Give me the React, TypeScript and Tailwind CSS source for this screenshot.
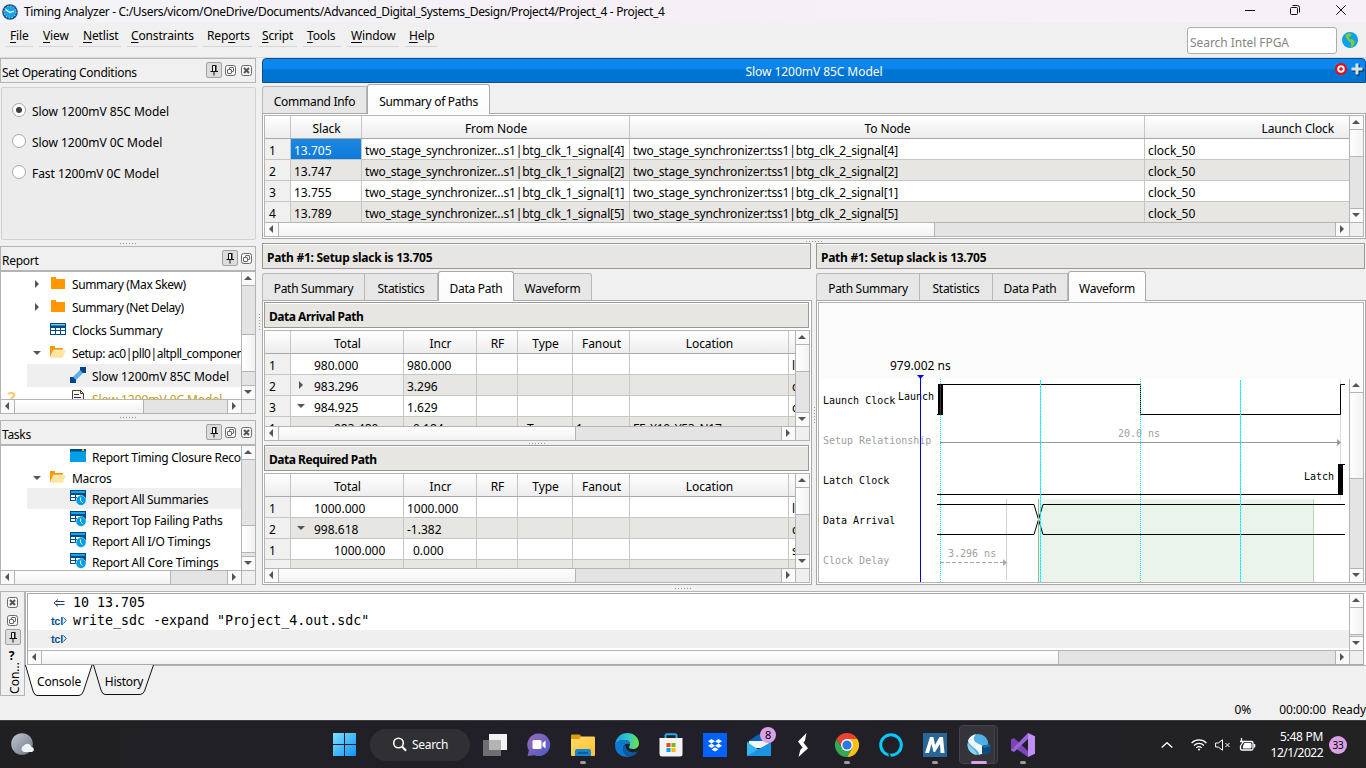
import React from "react";

/* ---------- shared controls ---------- */

function Arrow({ dir, className = "" }: { dir: "up" | "down" | "left" | "right"; className?: string }) {
  const d = {
    up: "M0 6L4 2L8 6Z",
    down: "M0 2L8 2L4 6Z",
    left: "M6 0L6 8L2 4Z",
    right: "M2 0L6 4L2 8Z",
  }[dir];
  return (
    <svg viewBox="0 0 8 8" className={"block h-2 w-2 shrink-0 " + className}>
      <path d={d} fill="#555" />
    </svg>
  );
}

function VScroll({ pre, thumb }: { pre: string; thumb: string }) {
  return (
    <div className="flex w-[14px] shrink-0 flex-col border-l border-[#b4b4b4] bg-[#e4e4e4]">
      <div className="flex h-[14px] shrink-0 items-center justify-center border-b border-[#b4b4b4] bg-[#fafafa] pb-px pr-px">
        <Arrow dir="up" />
      </div>
      <div className={"shrink-0 " + pre} />
      <div className={"shrink-0 border-b border-[#b4b4b4] bg-gradient-to-r from-white to-[#f2f2f2] " + thumb} />
      <div className="flex-1" />
      <div className="flex h-[14px] shrink-0 items-center justify-center border-t border-[#b4b4b4] bg-[#fafafa] pb-px pr-px">
        <Arrow dir="down" />
      </div>
    </div>
  );
}

function HScroll({ thumb, corner = true }: { thumb: string; corner?: boolean }) {
  return (
    <div className="flex h-[14px] shrink-0 border-t border-[#b4b4b4] bg-[#e4e4e4]">
      <div className="flex w-[14px] shrink-0 items-center justify-center border-r border-[#b4b4b4] bg-[#fafafa] pb-px pr-px">
        <Arrow dir="left" />
      </div>
      <div className={"shrink-0 border-r border-[#b4b4b4] bg-gradient-to-b from-white to-[#f2f2f2] " + thumb} />
      <div className="flex-1" />
      <div className="flex w-[14px] shrink-0 items-center justify-center border-l border-[#b4b4b4] bg-[#fafafa] pb-px pr-px">
        <Arrow dir="right" />
      </div>
      {corner && <div className="w-[14px] shrink-0 border-l border-[#b4b4b4] bg-[#efefef]" />}
    </div>
  );
}

function HDots({ className = "" }: { className?: string }) {
  return (
    <div className={"flex shrink-0 items-center justify-center gap-[2px] " + className}>
      {[0, 1, 2, 3, 4, 5].map((i) => (
        <span key={i} className="h-px w-px bg-[#9a9a9a]" />
      ))}
    </div>
  );
}

function VDots({ className = "" }: { className?: string }) {
  return (
    <div className={"flex shrink-0 flex-col items-center justify-center gap-[2px] " + className}>
      {[0, 1, 2, 3, 4, 5].map((i) => (
        <span key={i} className="h-px w-px bg-[#9a9a9a]" />
      ))}
    </div>
  );
}

function PinButton() {
  return (
    <span className="flex h-4 w-4 shrink-0 items-center justify-center rounded-[2px] border border-[#a2a2a2] bg-[#dcdcdc]">
      <svg viewBox="0 0 10 12" className="h-3 w-[10px] shrink-0" fill="none" stroke="#111">
        <path d="M3.500 7V1.500H6.500V7" fill="#efefef" />
        <path d="M7 1v6.500" />
        <path d="M1.500 7.500h7.500M5 8v3.500" />
      </svg>
    </span>
  );
}

function FloatButton() {
  return (
    <svg viewBox="0 0 11 11" className="block h-[11px] w-[11px] shrink-0" fill="none" stroke="#6a6a6a">
      <rect x=".5" y=".5" width="10" height="10" rx="2" fill="#f6f6f6" />
      <rect x="4.500" y="2.500" width="4" height="4" rx=".5" />
      <rect x="2.500" y="4.500" width="4" height="4" rx=".5" fill="#f6f6f6" />
    </svg>
  );
}

function CloseButton() {
  return (
    <svg viewBox="0 0 11 11" className="block h-[11px] w-[11px] shrink-0" fill="none" stroke="#6a6a6a">
      <rect x=".5" y=".5" width="10" height="10" rx="2" fill="#f6f6f6" />
      <path d="M3 3l5 5M8 3l-5 5" stroke="#555" strokeWidth="2" />
    </svg>
  );
}

function DockTitle({ title, close }: { title: string; close?: boolean }) {
  return (
    <div className="flex h-[25px] w-64 shrink-0 items-start justify-between border border-[#b4b4b4] bg-[#f0f0f0] pl-px pr-[3px]">
      <span className="leading-[27px]">{title}</span>
      <span className="flex items-center pt-[3px]">
        <PinButton />
        <span className="ml-[3px]">
          <FloatButton />
        </span>
        {close && (
          <span className="ml-[5px]">
            <CloseButton />
          </span>
        )}
      </span>
    </div>
  );
}

/* ---------- tree icons ---------- */

const FolderIcon = () => (
  <svg viewBox="0 0 16 14" className="h-[14px] w-4">
    <path d="M1 1h5v2h9v10H1z" fill="#ff9800" />
  </svg>
);
const OpenFolderIcon = () => (
  <svg viewBox="0 0 16 14" className="h-[14px] w-4">
    <path d="M0 1h5v2h8v9H0z" fill="#ff9800" />
    <path d="M3.500 5H16l-3 8H0z" fill="#ffe5a0" stroke="#fff" strokeWidth=".5" />
  </svg>
);
const TableIcon = () => (
  <svg viewBox="0 0 16 14" className="h-[14px] w-4">
    <path d="M0 1h16v12H0z" fill="#004a86" />
    <path d="M1 2h14v1.500H1z" fill="#6fc6ef" />
    <path d="M1 6h4v2H1zM6 6h4v2H6zM11 6h4v2h-4zM1 9h4v3H1zM6 9h4v3H6zM11 9h4v3h-4z" fill="#fff" />
  </svg>
);
const PathIcon = () => (
  <svg viewBox="0 0 16 16" className="h-4 w-4">
    <path d="M3 13L13 3" stroke="#5bb0ea" strokeWidth="4.500" />
    <path d="M10 0h6v6h-3l-3-3zM0 10h3l3 3v3H0z" fill="#00478a" />
  </svg>
);
const PageIcon = () => (
  <svg viewBox="0 0 16 16" className="h-4 w-4" fill="none">
    <path d="M2.500 .5h8l3 3v12h-11z" fill="#fff7ea" stroke="#4b4036" />
    <path d="M10.500 .5v3h3" stroke="#4b4036" />
    <path d="M4 4.500h5M4 7.500h7M4 10.500h7" stroke="#1f2f7a" />
  </svg>
);
const WindowIcon = () => (
  <svg viewBox="0 0 16 14" className="h-[14px] w-4">
    <path d="M0 1h16v12H0z" fill="#00a0e9" />
    <path d="M0 0h16v2.500H0z" fill="#004a86" />
    <path d="M12 0h2v2h-2z" fill="#ffb400" />
  </svg>
);
const MacroIcon = () => (
  <svg viewBox="0 0 16 16" className="h-4 w-4">
    <path d="M0 0h16v11H0z" fill="#004a86" />
    <path d="M1 1h14v2H1z" fill="#12a5ea" />
    <path d="M1 5h4v2H1zM6 5h4v2H6zM1 8h4v2H1zM6 8h4v2H6z" fill="#fff" />
    <circle cx="11" cy="10.500" r="5" fill="#009fe3" stroke="#fff" strokeWidth=".5" />
    <path d="M10.600 7.500v3l1.800 2.200" stroke="#fff" fill="none" />
  </svg>
);

function TreeRow({
  level,
  arrow,
  icon,
  label,
  h,
  active,
  warn,
  spacing = "",
}: {
  level: 1 | 2;
  arrow?: "right" | "down";
  icon: React.ReactNode;
  label: string;
  h: string;
  active?: boolean;
  warn?: boolean;
  spacing?: string;
}) {
  return (
    <div className={"flex shrink-0 " + h}>
      <div className="w-[26px] shrink-0 pl-[7px] text-[16px] font-bold leading-[22px] text-[#ffc966]">{warn ? "?" : ""}</div>
      <div className={"flex h-full flex-1 items-center whitespace-nowrap " + (active ? "bg-[#efefef]" : "")}>
        <span className={"flex shrink-0 items-center pl-[6px] " + (level === 1 ? "w-[23px]" : "w-[43px]")}>
          {arrow && <Arrow dir={arrow} />}
        </span>
        <span className="flex w-[22px] shrink-0 pb-px">{icon}</span>
        <span className={"pt-[3px] " + spacing + (warn ? " text-[#c8a000]" : "")}>{label}</span>
      </div>
    </div>
  );
}

/* ---------- tables and tabs ---------- */

function Tabs({ items, active }: { items: { label: string; w: string }[]; active: number }) {
  return (
    <div className="flex h-[30px] shrink-0 items-end border-b border-[#a9a9a9]">
      {items.map((t, i) =>
        i === active ? (
          <div
            key={t.label}
            className={
              "relative top-px h-[30px] rounded-t-[3px] border border-b-0 border-[#a9a9a9] bg-gradient-to-b from-white to-[#fbfbfb] text-center leading-[33px] " +
              t.w
            }
          >
            {t.label}
          </div>
        ) : (
          <div
            key={t.label}
            className={
              "h-[27px] border-r border-t border-[#b9b9b9] bg-[#e7e7e7] text-center leading-[30px] first:rounded-tl-[3px] first:border-l last:rounded-tr-[3px] " +
              t.w
            }
          >
            {t.label}
          </div>
        )
      )}
    </div>
  );
}

function LabelBox({ children, className = "mr-px tracking-[-0.48px]" }: { children: React.ReactNode; className?: string }) {
  return (
    <div
      className={
        "h-[26px] shrink-0 border border-[#999993] bg-[#e8e6e2] pl-1 text-[12px] font-bold leading-[27px] shadow-[inset_0_1px_0_#fff] " + className
      }
    >
      {children}
    </div>
  );
}

const topCols = [
  { h: "Slack", w: "w-[71px]" },
  { h: "From Node", w: "w-[268px]" },
  { h: "To Node", w: "w-[515px]" },
];
const topRows = [
  ["1", "13.705", "4"],
  ["2", "13.747", "2"],
  ["3", "13.755", "1"],
  ["4", "13.789", "5"],
];

function HeadCell({ w, children }: { w: string; children?: React.ReactNode }) {
  return (
    <div
      className={
        "h-full shrink-0 overflow-hidden whitespace-nowrap border-r border-[#c6c6c6] pl-px text-center leading-[26px] tracking-[-0.1px] " + w
      }
    >
      {children}
    </div>
  );
}

function Cell({ w, className = "tracking-normal", children }: { w: string; className?: string; children?: React.ReactNode }) {
  return (
    <div className={"flex h-full shrink-0 overflow-hidden whitespace-nowrap border-r border-[#c6c6c6] leading-[24px] " + w + " " + className}>
      {children}
    </div>
  );
}

function PathsTable() {
  return (
    <div className="flex h-[125px] shrink-0 flex-col border-x border-b border-[#a9a9a9] bg-white p-px">
      <div className="flex h-full flex-col border border-[#b4b4b4]">
        <div className="flex h-[106px] shrink-0">
          <div className="flex flex-1 flex-col overflow-hidden">
            <div className="flex h-[23px] shrink-0 border-b border-[#a9a9a9] bg-gradient-to-b from-white to-[#ededed]">
              <HeadCell w="w-[26px]" />
              {topCols.map((c) => (
                <HeadCell key={c.h} w={c.w}>
                  {c.h}
                </HeadCell>
              ))}
              <div className="flex-1 pr-[15px] text-right leading-[26px] tracking-[-0.15px]">Launch Clock</div>
            </div>
            {topRows.map((r, i) => (
              <div key={r[0]} className={"flex h-[21px] shrink-0 border-b border-[#c6c6c6] " + (i % 2 ? "bg-[#e8e6e2]" : "bg-white")}>
                <Cell w="w-[26px]" className="bg-[#f0f0f0] pl-1 tracking-normal">
                  {r[0]}
                </Cell>
                <Cell
                  w="w-[71px]"
                  className={"pl-[3px] tracking-normal " + (i === 0 ? "bg-gradient-to-b from-[#1e88e0] to-[#0a7ada] text-white" : "")}
                >
                  {r[1]}
                </Cell>
                <Cell w="w-[268px]" className="pl-[3px] tracking-[-0.17px]">
                  {"two_stage_synchronizer...s1|btg_clk_1_signal[" + r[2] + "]"}
                </Cell>
                <Cell w="w-[515px]" className="pl-[3px] tracking-[-0.17px]">
                  {"two_stage_synchronizer:tss1|btg_clk_2_signal[" + r[2] + "]"}
                </Cell>
                <div className="flex-1 pl-[3px] leading-[24px] tracking-normal">clock_50</div>
              </div>
            ))}
          </div>
          <VScroll pre="h-0" thumb="h-[27px]" />
        </div>
        <HScroll thumb="w-[656px]" />
      </div>
    </div>
  );
}

type PRow = {
  n: string;
  arrow?: "right" | "down";
  total: string;
  indent?: boolean;
  incr: string;
  type?: string;
  fan?: string;
  loc?: string;
  el: string;
  light?: boolean;
};

function PathTable({ rows, height, body }: { rows: PRow[]; height: string; body: string }) {
  return (
    <div className={"flex shrink-0 flex-col border border-[#b4b4b4] bg-white " + height}>
      <div className={"flex shrink-0 " + body}>
        <div className="flex flex-1 flex-col overflow-hidden">
          <div className="flex h-[23px] shrink-0 border-b border-[#a9a9a9] bg-gradient-to-b from-white to-[#ededed]">
            <HeadCell w="w-[26px]" />
            <HeadCell w="w-[113px]">Total</HeadCell>
            <HeadCell w="w-[73px]">Incr</HeadCell>
            <HeadCell w="w-[41px]">RF</HeadCell>
            <HeadCell w="w-[55px]">Type</HeadCell>
            <HeadCell w="w-[57px]">Fanout</HeadCell>
            <HeadCell w="w-[159px]">Location</HeadCell>
          </div>
          {rows.map((r, i) => (
            <div key={i} className={"flex h-[21px] shrink-0 border-b border-[#c6c6c6] " + (i % 2 ? "bg-[#e8e6e2]" : "bg-white")}>
              <Cell w="w-[26px]" className="bg-[#f0f0f0] pl-1 tracking-normal">
                {r.n}
              </Cell>
              <Cell w="w-[113px]" className={"tracking-normal " + (r.light ? "bg-[#f0f0f0]" : "")}>
                <span className={"flex shrink-0 items-center pl-[6px] " + (r.indent ? "w-[43px]" : "w-[23px]")}>
                  {r.arrow && <Arrow dir={r.arrow} />}
                </span>
                {r.total}
              </Cell>
              <Cell w="w-[73px]" className={"tracking-normal " + (r.indent ? "pl-[9px]" : "pl-[3px]")}>
                {r.incr}
              </Cell>
              <Cell w="w-[41px]" />
              <Cell w="w-[55px]" className="pl-[9px]">
                {r.type}
              </Cell>
              <Cell w="w-[57px]" className="pl-[3px]">
                {r.fan}
              </Cell>
              <Cell w="w-[159px]" className="pl-[3px]">
                {r.loc}
              </Cell>
              <div className="w-[6px] shrink-0 overflow-hidden pl-[3px] leading-[24px]">{r.el}</div>
            </div>
          ))}
        </div>
        <VScroll pre="h-0" thumb="h-[27px]" />
      </div>
      <HScroll thumb="w-[297px]" />
    </div>
  );
}

const arrival: PRow[] = [
  { n: "1", total: "980.000", incr: "980.000", el: "l" },
  { n: "2", arrow: "right", total: "983.296", incr: "3.296", el: "c", light: true },
  { n: "3", arrow: "down", total: "984.925", incr: "1.629", el: "c" },
  { n: "1", indent: true, total: "983.480", incr: "0.184", type: "Tco", fan: "1", loc: "FF_X10_Y53_N17", el: "" },
];
const required: PRow[] = [
  { n: "1", total: "1000.000", incr: "1000.000", el: "l" },
  { n: "2", arrow: "down", total: "998.618", incr: "-1.382", el: "c" },
  { n: "1", indent: true, total: "1000.000", incr: "0.000", el: "s" },
  { n: "", total: "", incr: "", el: "" },
];

/* ---------- waveform ---------- */

function Waveform() {
  return (
    <svg
      viewBox="819 303 530 279"
      className="block h-[279px] w-[530px] shrink-0 [font-family:'DejaVu_Sans_Mono',monospace] text-[10px] tracking-normal"
      fill="none"
    >
      <rect x="819" y="303" width="530" height="76" fill="#fcfcfc" />
      <rect x="1039" y="499" width="275" height="83" fill="#ebf4eb" />
      <path d="M1313.500 499V582" stroke="#b5d6b5" />
      <path d="M1006.500 499V580" stroke="#d0d0d0" />
      <path d="M1340.500 379V500" stroke="#dedede" />
      <g fill="#000">
        <text x="823" y="404">Launch Clock</text>
        <text x="823" y="484">Latch Clock</text>
        <text x="823" y="524">Data Arrival</text>
        <text x="898" y="400">Launch</text>
        <text x="1304" y="480">Latch</text>
      </g>
      <g fill="#a0a0a0">
        <text x="823" y="444">Setup Relationship</text>
        <text x="823" y="564">Clock Delay</text>
        <text x="948" y="557">3.296 ns</text>
        <text x="1118" y="437">20.0 ns</text>
      </g>
      <path d="M940 442.500H1338" stroke="#999" />
      <path d="M1337 439L1341 442.500L1337 446Z" fill="#999" />
      <path d="M940 562.500H1003" stroke="#a8a8a8" strokeDasharray="4 2" />
      <path d="M1003 559L1007 562.500L1003 566Z" fill="#a8a8a8" />
      <g stroke="#000">
        <path d="M937 414.500H943M940 384.500H1140.500V414.500H1340.500V384.500H1345" />
        <path d="M937 494.500H1343M1340 464.500H1345" />
        <path d="M937 504.500H1034L1043 534.500H1345M937 534.500H1034L1043 504.500H1345" />
      </g>
      <path d="M1038.500 499V582" stroke="#8fbf9a" />
      <rect x="938" y="384" width="5" height="31" fill="#000" />
      <rect x="1338" y="464" width="5" height="31" fill="#000" />
      <path d="M940.500 379V582M1140.500 379V582" stroke="#00e5e5" strokeDasharray="1 1" />
      <path d="M1040.500 380V582M1240.500 380V582" stroke="#00ffff" strokeOpacity=".6" />
      <path d="M1040.500 380V582M1240.500 380V582" stroke="#00f4f4" strokeDasharray="2 1" />
      <path d="M940.500 384V415" stroke="#333" />
      <path d="M920.500 376V582" stroke="#0000f0" />
      <path d="M917 375H924L920.500 379Z" fill="#0000f0" />
      <text x="890" y="370" fill="#000" className="text-[12px] [font-family:'Noto_Sans',sans-serif]">
        979.002 ns
      </text>
    </svg>
  );
}

/* ---------- taskbar ---------- */

function TaskCell({ children, dot, badge, active }: { children: React.ReactNode; dot?: boolean; badge?: string; active?: boolean }) {
  return (
    <div className="relative flex h-12 w-11 shrink-0 items-center justify-center">
      {active && <span className="absolute left-[5px] top-[4px] h-[39px] w-[36px] rounded-[4px] border border-[#444348] bg-[#2b2a30]" />}
      {active && <span className="absolute left-[2px] top-[4px] h-[39px] w-[36px] rounded-[4px] border border-[#444348] bg-[#35343a]" />}
      <span className="relative">{children}</span>
      {dot && <span className="absolute bottom-[5px] left-[19px] h-[3px] w-[6px] rounded-full bg-[#9c9c9c]" />}
      {active && <span className="absolute bottom-[5px] left-[14px] h-[3px] w-4 rounded-full bg-[#dca0e6]" />}
      {badge && (
        <span className="absolute left-[23px] top-[6px] flex h-4 w-4 items-center justify-center rounded-full bg-[#dca0e6] text-[11px] text-black">
          {badge}
        </span>
      )}
    </div>
  );
}

function Taskbar() {
  return (
    <div className="flex h-12 shrink-0 items-center border-t border-[#3d3d3f] bg-gradient-to-r from-[#202022] via-[#211f29] to-[#222] text-white">
      <div className="w-[322px] shrink-0 pl-[11px]">
        <svg viewBox="0 0 24 24" className="h-6 w-6">
          <defs>
            <linearGradient id="moon" x1="0" y1="0" x2="1" y2="1">
              <stop offset="0" stopColor="#c1c7d0" />
              <stop offset="1" stopColor="#6d7683" />
            </linearGradient>
          </defs>
          <circle cx="11" cy="11" r="10.800" fill="url(#moon)" />
          <path d="M13 19a3.300 3.300 0 0 1-.3-6.300 4.200 4.200 0 0 1 7.700 1.200 2.600 2.600 0 0 1 .6 5.100z" fill="#eef2f7" />
        </svg>
      </div>
      <TaskCell>
        <svg viewBox="0 0 23 23" className="h-[23px] w-[23px]">
          <defs>
            <linearGradient id="win" x1="0" y1="0" x2="1" y2="1">
              <stop offset="0" stopColor="#7fe0ff" />
              <stop offset="1" stopColor="#0f93f8" />
            </linearGradient>
          </defs>
          <path d="M0 0h11v11H0zM12 0h11v11H12zM0 12h11v11H0zM12 12h11v11H12z" fill="url(#win)" />
        </svg>
      </TaskCell>
      <div className="ml-1 mr-[3px] flex h-8 w-[100px] shrink-0 items-center rounded-full bg-[#303034] pl-[22px]">
        <svg viewBox="0 0 15 15" className="h-[15px] w-[15px]" fill="none" stroke="#fff" strokeWidth="1.600">
          <circle cx="6.500" cy="6" r="4.800" />
          <path d="M10 9.500L14 13.800" strokeWidth="2" />
        </svg>
        <span className="ml-[5px] text-[12px] tracking-[-0.3px]">Search</span>
      </div>
      <TaskCell>
        <svg viewBox="0 0 24 22" className="h-[22px] w-6">
          <path d="M6 0h18v16H6z" fill="#f2f2f2" />
          <path d="M0 6h18v16H0z" fill="#6f6f6f" />
          <path d="M6 6h12v10H6z" fill="#b4b4b4" />
        </svg>
      </TaskCell>
      <TaskCell>
        <svg viewBox="0 0 24 24" className="h-6 w-6">
          <defs>
            <linearGradient id="chat" x1="0" y1="0" x2="1" y2="1">
              <stop offset="0" stopColor="#9a6fb8" />
              <stop offset="1" stopColor="#4d56c8" />
            </linearGradient>
          </defs>
          <path d="M12 .5a11.300 11.300 0 1 1-4.500 21.700l-7 .8 1.400-5.500A11.300 11.300 0 0 1 12 .5z" fill="url(#chat)" />
          <rect x="5.500" y="7" width="9" height="9" rx="1.500" fill="#fff" />
          <path d="M15.500 10l3-2.500v8l-3-2.500z" fill="#fff" />
        </svg>
      </TaskCell>
      <TaskCell dot>
        <svg viewBox="0 0 24 22" className="h-[22px] w-6">
          <defs>
            <linearGradient id="fold" x1="0" y1="0" x2="1" y2="1">
              <stop offset="0" stopColor="#ffdb66" />
              <stop offset="1" stopColor="#fdc02f" />
            </linearGradient>
          </defs>
          <path d="M0 1.500Q0 .5 1 .5h7.500l2.500 2.500h12v6H0z" fill="#dc9b10" />
          <path d="M0 5h8l2.500-2.500H23q1 0 1 1V21q0 1-1 1H1q-1 0-1-1z" fill="url(#fold)" />
          <path d="M4 22v-5q0-2 2-2h12q2 0 2 2v5z" fill="#1384d0" />
          <path d="M7 19h10" stroke="#0a5c9c" strokeWidth="2" />
        </svg>
      </TaskCell>
      <TaskCell>
        <svg viewBox="0 0 24 24" className="h-6 w-6">
          <defs>
            <linearGradient id="edgeA" x1="0" y1=".2" x2="1" y2=".3">
              <stop offset="0" stopColor="#1b9de2" />
              <stop offset=".55" stopColor="#30c9c7" />
              <stop offset="1" stopColor="#6de04e" />
            </linearGradient>
          </defs>
          <path d="M.2 11C1 4.500 6 0 12.200 0 19 0 24 5 24 10.500c0 3.500-2.800 5.500-6 5.500-2.500 0-4-.8-4-1.700 0-.8 1-1.200 1-3.300C15 8.500 12.500 7 9.500 7 4.500 7 1 9 .2 13z" fill="url(#edgeA)" />
          <path d="M.2 11.500C1.500 8.500 5 7 9 7c3.500 0 6 2 6 4.200C11 9.500 8 12 8 15.500c0 4 3 7.500 6.500 8.200C7 25-.8 20 .2 11.500z" fill="#0f79cf" />
          <path d="M9 12.500C6 17 9.500 23.500 14.500 23.800c4-.5 6.700-2.500 8-5 .2-.4-.1-.6-.4-.4-5.100 2.600-12-.4-11.700-6.900z" fill="#0c59a4" />
        </svg>
      </TaskCell>
      <TaskCell>
        <svg viewBox="0 0 24 24" className="h-6 w-6">
          <path d="M6.500 7V2.500Q6.500 1.200 7.800 1.200h8.400q1.300 0 1.300 1.300V7" fill="none" stroke="#29a9e8" strokeWidth="2" />
          <path d="M.5 5h23v16q0 2.500-2.500 2.500H3q-2.500 0-2.500-2.500z" fill="#f4f4f4" />
          <path d="M7.500 10h4v4h-4z" fill="#e64a19" />
          <path d="M12.500 10h4v4h-4z" fill="#7cb518" />
          <path d="M7.500 15h4v4h-4z" fill="#0b9fe8" />
          <path d="M12.500 15h4v4h-4z" fill="#fdb80c" />
        </svg>
      </TaskCell>
      <TaskCell>
        <svg viewBox="0 0 24 24" className="h-6 w-6">
          <path d="M0 0h24v24H0z" fill="#0061fe" />
          <path
            d="M8.500 6l3.500 2.200-3.500 2.200L5 8.200zM15.500 6L19 8.200l-3.500 2.200L12 8.200zM8.500 10.600l3.500 2.200L8.500 15 5 12.800zM15.500 10.600l3.500 2.200-3.500 2.200-3.500-2.200zM12 14.200l3.500 2.200L12 18.600l-3.500-2.200z"
            fill="#fff"
          />
        </svg>
      </TaskCell>
      <TaskCell badge="8">
        <svg viewBox="0 0 24 24" className="h-6 w-6">
          <path d="M0 9L12 1l12 8v4H0z" fill="#0a62b8" />
          <path d="M2 8h20v7H2z" fill="#f4f6f8" />
          <path d="M0 9l12 8 12-8v14H0z" fill="#35b6f2" />
          <path d="M24 9v14H0z" fill="#1c94e4" />
        </svg>
      </TaskCell>
      <TaskCell>
        <svg viewBox="0 0 24 24" className="h-6 w-6" fill="#fff">
          <path d="M15.500 0L14 7.500l-1.500 2.200 4.500 5.500L7.500 24l1.800-7 2.200-2.500-4.500-6z" />
        </svg>
      </TaskCell>
      <TaskCell dot>
        <svg viewBox="0 0 24 24" className="h-6 w-6">
          <path d="M12 6h10.400a12 12 0 0 0-20.800 0l5.300 9z" fill="#ea4335" />
          <path d="M17.200 15L12 24A12 12 0 0 0 22.400 6H12z" fill="#fbc116" />
          <path d="M6.800 15L1.600 6A12 12 0 0 0 12 24l5.200-9z" fill="#34a853" />
          <circle cx="12" cy="12" r="6" fill="#fff" />
          <circle cx="12" cy="12" r="4.600" fill="#2b78e4" />
        </svg>
      </TaskCell>
      <TaskCell>
        <svg viewBox="0 0 24 24" className="h-6 w-6">
          <circle cx="12" cy="12" r="10.300" fill="none" stroke="#00caff" strokeWidth="3" />
          <path d="M10 20.500l1 3.500" stroke="#211f27" strokeWidth="1.800" />
        </svg>
      </TaskCell>
      <TaskCell dot>
        <svg viewBox="0 0 24 24" className="h-6 w-6">
          <path d="M0 0h24v24H0z" fill="#276696" />
          <path d="M2 20L7 4h3.500l1.500 8 4.500-8H20l1.500 16h-4L17 11l-5 8h-1.500L8.500 11 6 20z" fill="#fff" />
        </svg>
      </TaskCell>
      <TaskCell active>
        <svg viewBox="0 0 24 24" className="h-6 w-6">
          <circle cx="11" cy="11.500" r="10.500" fill="#4fb0e2" />
          <path d="M1 8C2 4 6 1.500 9 1.200 7 3 6 5.500 7.500 8c2 3.500 9 3.500 10.500 7.500 0 3-3 5.500-6 6C12 16 3 14 1 8z" fill="#f3f9fd" />
          <path d="M1 10c2 5 8 6.500 9 12C5 21.500 .5 17 .5 12z" fill="#8fd0f0" />
          <path d="M15 13l6.500-1.500 2.500 1.500v6.500L18 22l-3-2z" fill="#0a4c80" />
          <path d="M15 13l6.500-1.500 2.500 1.500-6.500 2z" fill="#1f6ea5" />
        </svg>
      </TaskCell>
      <TaskCell dot>
        <svg viewBox="0 0 24 24" className="h-6 w-6">
          <path d="M0 6.500L3 5l15 14-1 5L3 14.500l-1 .5v3l-2-1z" fill="#7a45b8" />
          <path d="M0 17.500L17 0l1 5L3 19z" fill="#9b63da" />
          <path d="M17 0l7 3.200v17.600L17 24z" fill="#c08ff5" />
        </svg>
      </TaskCell>
      <div className="ml-auto flex items-center">
        <svg viewBox="0 0 12 6" className="h-[6px] w-3" fill="none" stroke="#fff" strokeWidth="1.300">
          <path d="M.7 5.500L6 .7l5.300 4.800" />
        </svg>
        <svg viewBox="0 0 16 13" className="ml-[18px] h-[13px] w-4" fill="none" stroke="#fff" strokeWidth="1.200">
          <path d="M.6 5a10.500 10.500 0 0 1 14.800 0M3 7.500a7 7 0 0 1 10 0M5.300 9.800a3.800 3.800 0 0 1 5.400 0" />
          <circle cx="8" cy="11.500" r="1" fill="#fff" stroke="none" />
        </svg>
        <svg viewBox="0 0 16 12" className="ml-2 h-3 w-4" fill="none" stroke="#fff">
          <path d="M.6 4h2.600L7.500.8v10.400L3.200 8H.6zM10.500 4l4 4M14.500 4l-4 4" />
        </svg>
        <svg viewBox="0 0 18 14" className="ml-[7px] h-[14px] w-[18px]" fill="none" stroke="#fff">
          <path d="M6 3.500h7.500q1.500 0 1.500 1.500v5.500q0 1.500-1.500 1.500H4q-1.500 0-1.500-1.500V8" strokeWidth="1.300" />
          <path d="M6.500 5.500h6.500v4.500H5z" fill="#fff" />
          <path d="M16.500 6v3.500" strokeWidth="1.500" />
          <path d="M3.500 0v3M2 3.500h3.500L2.500 8" strokeWidth="1.300" />
        </svg>
        <div className="ml-[14px] w-[53px] whitespace-nowrap text-right text-[12px] leading-4 tracking-[-0.5px]">
          <div className="tracking-[-0.3px]">5:48 PM</div>
          <div>12/1/2022</div>
        </div>
        <div className="ml-[6px] mr-[19px] flex h-[18px] w-[18px] items-center justify-center rounded-full bg-[#dca0e6] text-[10px] text-black">
          33
        </div>
      </div>
    </div>
  );
}

/* ---------- page ---------- */

function TitleBar() {
  return (
    <div className="flex h-[23px] shrink-0 items-center bg-gradient-to-r from-[#f3f3f8] via-[#f5f0f5] to-[#f6f1f6]">
      <svg viewBox="0 0 16 16" className="ml-[2px] h-4 w-4">
        <circle cx="8" cy="8" r="7.800" fill="#1a4f86" />
        <circle cx="8" cy="8" r="6" fill="#14a5ee" stroke="#cfeaf9" strokeWidth="1" strokeDasharray="1.200 1.900" />
        <path d="M3.500 5.500L8 8.500l4-1.500" fill="none" stroke="#fff" strokeWidth="1.300" />
      </svg>
      <span className="ml-[6px] whitespace-nowrap text-[12px] leading-[23px] tracking-[-0.33px]">
        Timing Analyzer - C:/Users/vicom/OneDrive/Documents/Advanced_Digital_Systems_Design/Project4/Project_4 - Project_4
      </span>
      <div className="ml-auto mr-[20px] flex items-center pb-[3px]">
        <svg viewBox="0 0 10 10" className="h-[10px] w-[10px]" stroke="#111" fill="none">
          <path d="M0 5.500h10" />
        </svg>
        <svg viewBox="0 0 10 10" className="ml-[35px] h-[10px] w-[10px]" stroke="#111" fill="none">
          <rect x=".5" y="2.500" width="7" height="7" rx="1" />
          <path d="M2.500 .5h5q2 0 2 2v5" />
        </svg>
        <svg viewBox="0 0 10 10" className="ml-[36px] h-[10px] w-[10px]" stroke="#111" fill="none">
          <path d="M.3 .3l9.400 9.400M9.700 .3L.3 9.700" />
        </svg>
      </div>
    </div>
  );
}

const menus = [
  { a: "", u: "F", b: "ile", w: "w-[27px]" },
  { a: "", u: "V", b: "iew", w: "w-[34px]" },
  { a: "", u: "N", b: "etlist", w: "w-[42px]" },
  { a: "", u: "C", b: "onstraints", w: "w-[70px]" },
  { a: "Rep", u: "o", b: "rts", w: "w-[49px]" },
  { a: "", u: "S", b: "cript", w: "w-[39px]" },
  { a: "", u: "T", b: "ools", w: "w-[38px]" },
  { a: "", u: "W", b: "indow", w: "w-[52px]" },
  { a: "", u: "H", b: "elp", w: "w-[32px]" },
];

function MenuBar() {
  return (
    <div className="flex h-[35px] shrink-0 border-b border-[#d9d9d9]">
      <div className="flex h-6 gap-[6px] pl-[6px] tracking-[-0.15px]">
        {menus.map((m) => (
          <div key={m.u + m.b} className={"h-6 whitespace-nowrap border-b border-[#d6d6d6] pl-1 leading-[26px] " + m.w}>
            {m.a}
            <u className="underline-offset-2">{m.u}</u>
            {m.b}
          </div>
        ))}
      </div>
      <div className="ml-auto mt-1 h-[27px] w-[150px] rounded-[3px] border border-[#acacac] bg-white pl-[2px] leading-[29px] tracking-[-0.05px] text-[#858585]">
        Search Intel FPGA
      </div>
      <svg viewBox="0 0 16 16" className="ml-[5px] mr-2 mt-[9px] h-4 w-4">
        <circle cx="8" cy="8" r="8" fill="#0d9ff0" />
        <path d="M3.500 2.500l4-1.500 2 1-.5 2-2 1 .5 2 3.500.500 2 2-1 3.500-2 2.500-1-.5v-4L6.500 9 4 6z" fill="#7ccb3a" />
      </svg>
    </div>
  );
}

function Radio({ label, on }: { label: string; on?: boolean }) {
  return (
    <div className="flex h-[31px] items-center">
      <span className="mb-px flex h-[14px] w-[14px] items-center justify-center rounded-full border border-[#a8a8a8] bg-white">
        {on && <span className="h-[6px] w-[6px] rounded-full bg-[#3f3f3f]" />}
      </span>
      <span className="ml-[6px] pt-[3px] tracking-[-0.05px]">{label}</span>
    </div>
  );
}

function LeftColumn() {
  return (
    <div className="flex w-64 shrink-0 flex-col">
      <DockTitle title="Set Operating Conditions" close />
      <div className="ml-px mt-1 h-[153px] shrink-0 rounded-[2px] border border-[#d2d2d2] bg-[#ececec] pl-[10px] pt-[7px]">
        <Radio label="Slow 1200mV 85C Model" on />
        <Radio label="Slow 1200mV 0C Model" />
        <Radio label="Fast 1200mV 0C Model" />
      </div>
      <HDots className="h-[6px]" />
      <DockTitle title="Report" />
      <div className="flex h-[143px] shrink-0 flex-col border border-[#b4b4b4] bg-white">
        <div className="flex h-[127px] shrink-0">
          <div className="flex flex-1 flex-col overflow-hidden">
            <TreeRow h="h-[23px]" level={1} arrow="right" icon={<FolderIcon />} label="Summary (Max Skew)" spacing="tracking-[-0.38px]" />
            <TreeRow h="h-[23px]" level={1} arrow="right" icon={<FolderIcon />} label="Summary (Net Delay)" spacing="tracking-[-0.4px]" />
            <TreeRow h="h-[23px]" level={1} icon={<TableIcon />} label="Clocks Summary" spacing="tracking-[-0.2px]" />
            <TreeRow
              h="h-[23px]"
              level={1}
              arrow="down"
              icon={<OpenFolderIcon />}
              label="Setup: ac0|pll0|altpll_component"
              spacing="tracking-[-0.45px]"
            />
            <TreeRow h="h-[23px]" level={2} icon={<PathIcon />} label="Slow 1200mV 85C Model" active spacing="tracking-[-0.05px]" />
            <TreeRow h="h-[23px]" level={2} icon={<PageIcon />} label="Slow 1200mV 0C Model" warn spacing="tracking-[-0.05px]" />
          </div>
          <VScroll pre="h-[49px] border-b border-[#b4b4b4]" thumb="h-[37px]" />
        </div>
        <HScroll thumb="w-[129px]" />
      </div>
      <HDots className="h-[6px]" />
      <DockTitle title="Tasks" close />
      <div className="flex h-[140px] shrink-0 flex-col border border-[#b4b4b4] bg-white">
        <div className="flex h-[124px] shrink-0">
          <div className="flex flex-1 flex-col overflow-hidden">
            <TreeRow h="h-[21px]" level={2} icon={<WindowIcon />} label="Report Timing Closure Recommendations" />
            <TreeRow h="h-[21px]" level={1} arrow="down" icon={<OpenFolderIcon />} label="Macros" />
            <TreeRow h="h-[21px]" level={2} icon={<MacroIcon />} label="Report All Summaries" active />
            <TreeRow h="h-[21px]" level={2} icon={<MacroIcon />} label="Report Top Failing Paths" spacing="tracking-[-0.25px]" />
            <TreeRow h="h-[21px]" level={2} icon={<MacroIcon />} label="Report All I/O Timings" spacing="tracking-[-0.25px]" />
            <TreeRow h="h-[21px]" level={2} icon={<MacroIcon />} label="Report All Core Timings" spacing="tracking-[-0.25px]" />
          </div>
          <VScroll pre="h-[66px] border-b border-[#b4b4b4]" thumb="h-[27px]" />
        </div>
        <HScroll thumb="w-[156px]" />
      </div>
    </div>
  );
}

function RightColumn() {
  return (
    <div className="flex w-[1104px] shrink-0 flex-col">
      <div className="flex h-[25px] shrink-0 items-center rounded-t-[4px] border border-[#04508f] bg-gradient-to-b from-[#0a86ee] from-40% to-[#0074d3] to-50% text-white">
        <span className="flex-1 pl-[30px] pt-[3px] text-center tracking-[-0.05px]">Slow 1200mV 85C Model</span>
        <svg viewBox="0 0 12 12" className="mb-[3px] h-3 w-3">
          <circle cx="6" cy="6" r="6" fill="#f00" />
          <circle cx="6" cy="6" r="3.800" fill="#fff" />
          <circle cx="6" cy="6" r="1.800" fill="#f00" />
        </svg>
        <svg viewBox="0 0 13 13" className="mb-[3px] ml-[4px] mr-px h-[13px] w-[13px]">
          <path d="M5.500 1.500h3v4h4v3h-4v4h-3v-4h-4v-3h4z" fill="#06253f" />
          <path d="M4.500 .5h3v4h4v3h-4v4h-3v-4h-4v-3h4z" fill="#dbe3ea" />
        </svg>
      </div>
      <div className="h-px shrink-0" />
      <Tabs
        active={1}
        items={[
          { label: "Command Info", w: "w-[105px]" },
          { label: "Summary of Paths", w: "w-[123px]" },
        ]}
      />
      <PathsTable />
      <HDots className="h-[4px]" />
      <div className="flex h-[343px] shrink-0">
        <div className="flex w-[550px] shrink-0 flex-col">
          <LabelBox className="mr-px tracking-[-0.27px]">Path #1: Setup slack is 13.705</LabelBox>
          <div className="h-[2px] shrink-0" />
          <Tabs
            active={2}
            items={[
              { label: "Path Summary", w: "w-[103px]" },
              { label: "Statistics", w: "w-[73px]" },
              { label: "Data Path", w: "w-[76px]" },
              { label: "Waveform", w: "w-[78px]" },
            ]}
          />
          <div className="flex h-[284px] shrink-0 flex-col border-x border-b border-[#a9a9a9] bg-white px-px pt-px">
            <LabelBox>Data Arrival Path</LabelBox>
            <div className="h-[2px] shrink-0" />
            <PathTable rows={arrival} height="h-[111px]" body="h-[95px]" />
            <HDots className="h-[4px] bg-[#f0f0f0]" />
            <LabelBox>Data Required Path</LabelBox>
            <div className="h-[2px] shrink-0" />
            <PathTable rows={required} height="h-[110px]" body="h-[94px]" />
          </div>
        </div>
        <VDots className="w-[4px]" />
        <div className="flex w-[550px] shrink-0 flex-col">
          <LabelBox className="mr-px tracking-[-0.27px]">Path #1: Setup slack is 13.705</LabelBox>
          <div className="h-[2px] shrink-0" />
          <Tabs
            active={3}
            items={[
              { label: "Path Summary", w: "w-[104px]" },
              { label: "Statistics", w: "w-[73px]" },
              { label: "Data Path", w: "w-[75px]" },
              { label: "Waveform", w: "w-[78px]" },
            ]}
          />
          <div className="h-[284px] shrink-0 border-x border-b border-[#a9a9a9] bg-white px-px pt-px">
            <div className="flex h-[281px] border border-[#b4b4b4]">
              <Waveform />
              <div className="flex h-[279px] flex-col">
                <div className="h-[76px] w-[14px] bg-[#fcfcfc]" />
                <div className="flex h-[203px]">
                  <VScroll pre="h-0" thumb="h-[86px]" />
                </div>
              </div>
            </div>
          </div>
        </div>
      </div>
    </div>
  );
}

function ConsoleTabs() {
  return (
    <div className="-mt-px flex h-[31px] shrink-0">
      <div className="relative h-[31px] w-[68px] shrink-0">
        <svg viewBox="0 0 68 31" className="absolute inset-0 h-[31px] w-[68px]">
          <path d="M.5 0L8 26Q9.500 30.500 12 30.500H54Q57 30.500 58.500 26L67 0" fill="#fff" stroke="#111" />
        </svg>
        <span className="relative block text-center leading-[34px] tracking-[-0.15px]">Console</span>
      </div>
      <div className="relative h-[31px] w-[61px] shrink-0">
        <svg viewBox="0 0 61 31" className="absolute inset-0 h-[31px] w-[61px]">
          <path d="M.5 0L8 25Q9.500 29.500 12 29.500H47Q50 29.500 51.500 26L60.500 0" fill="#f0f0f0" stroke="#111" />
        </svg>
        <span className="relative block pl-px text-center leading-[33px] tracking-[-0.3px]">History</span>
      </div>
    </div>
  );
}

function Prompt() {
  return (
    <span className="flex w-[45px] shrink-0 items-center pb-px pl-[23px] text-[11px] font-bold tracking-[-0.3px] text-[#0a5590] [font-family:'Liberation_Sans',sans-serif]">
      tcl
      <svg viewBox="0 0 4 7" className="h-[7px] w-1" fill="none" stroke="#0a5590">
        <path d="M.5 .5L3.200 3.500L.5 6.500" />
      </svg>
    </span>
  );
}

function Console() {
  return (
    <div className="flex h-[110px] shrink-0">
      <div className="flex h-[105px] w-[25px] shrink-0 flex-col items-center border border-[#b4b4b4] pt-[5px]">
        <CloseButton />
        <span className="mt-[7px] block">
          <FloatButton />
        </span>
        <span className="mt-[3px] block">
          <PinButton />
        </span>
        <span className="mr-[2px] mt-[2px] text-[12px] font-bold leading-[18px]">?</span>
        <span className="-mt-[3px] ml-[4px] rotate-180 leading-[14px] tracking-normal [writing-mode:vertical-rl]">Con...</span>
      </div>
      <div className="flex flex-1 flex-col">
        <div className="h-[75px] shrink-0 border-b border-l border-t border-[#b4b4b4] bg-white pl-px pr-[2px] pt-px">
          <div className="flex h-[72px] flex-col border border-[#a9a9a9]">
            <div className="flex h-[56px] shrink-0">
              <div className="flex-1 [font-family:'DejaVu_Sans_Mono',monospace] text-[13.3px] leading-[18px] tracking-normal">
                <div className="flex h-[18px] items-center">
                  <span className="flex w-[45px] justify-end pr-[8px]">
                    <svg viewBox="0 0 12 8" className="h-2 w-3" fill="none" stroke="#1c3f66">
                      <path d="M11.500 2.500H3M11.500 5.500H3M5 0.500L1 4L5 7.500" />
                    </svg>
                  </span>
                  <span>10 13.705</span>
                </div>
                <div className="flex h-[18px] items-center">
                  <Prompt />
                  <span>{'write_sdc -expand "Project_4.out.sdc"'}</span>
                </div>
                <div className="flex h-[18px] items-center bg-[#efefef]">
                  <Prompt />
                </div>
              </div>
              <VScroll pre="h-0" thumb="h-[27px]" />
            </div>
            <HScroll thumb="w-[1017px]" />
          </div>
        </div>
        <ConsoleTabs />
      </div>
    </div>
  );
}

export default function App() {
  return (
    <div className="flex h-[768px] w-[1366px] flex-col overflow-hidden bg-[#f0f0f0] [font-family:'Noto_Sans',sans-serif] text-[12px] leading-4 tracking-[-0.29px] text-black">
      <TitleBar />
      <MenuBar />
      <div className="flex h-[527px] shrink-0">
        <LeftColumn />
        <VDots className="w-[6px]" />
        <RightColumn />
      </div>
      <HDots className="h-[6px]" />
      <Console />
      <div className="flex h-[19px] shrink-0 justify-end whitespace-nowrap leading-[18px] tracking-[-0.1px]">
        <span>0%</span>
        <span className="ml-[28px]">00:00:00</span>
        <span className="ml-[6px]">Ready</span>
      </div>
      <Taskbar />
    </div>
  );
}
